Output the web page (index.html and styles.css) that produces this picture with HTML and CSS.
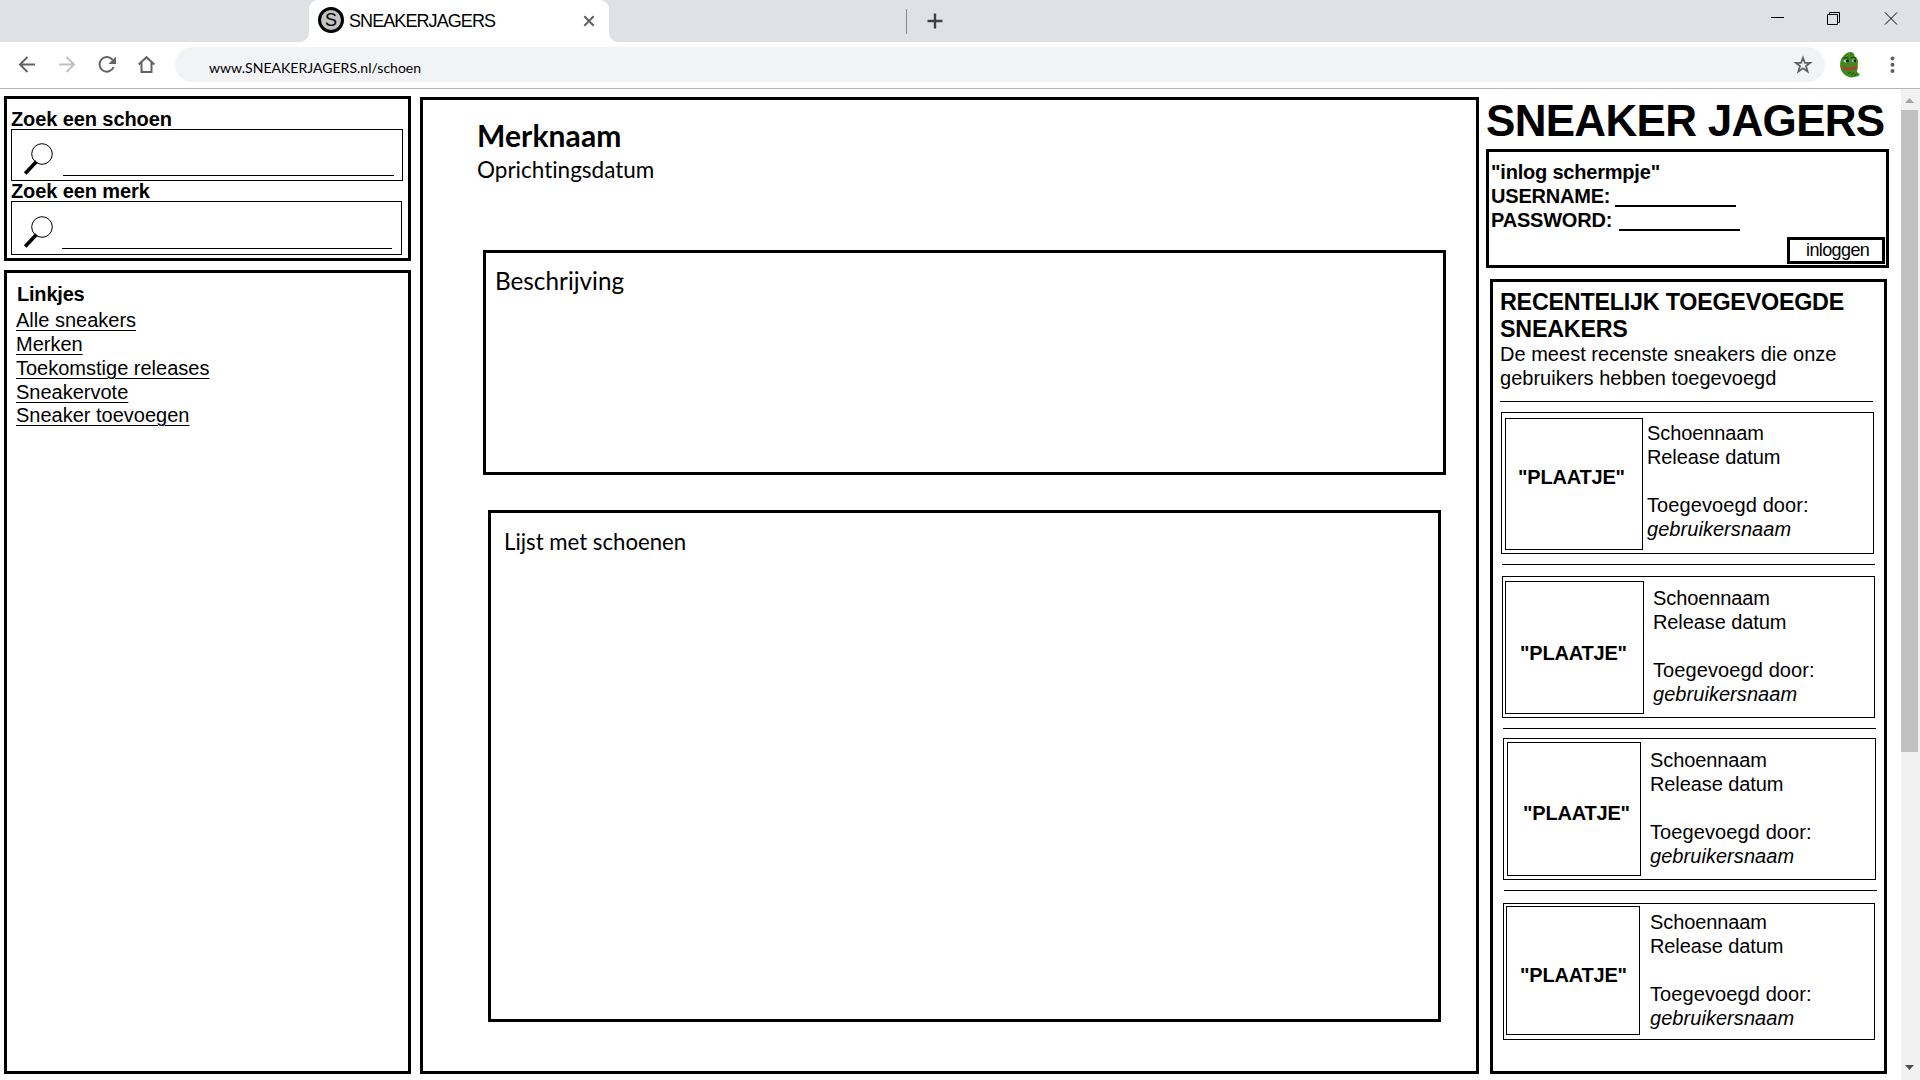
FILE: index.html
```
<!DOCTYPE html>
<html lang="nl">
<head>
<meta charset="utf-8">
<title>SNEAKERJAGERS</title>
<link rel="stylesheet" href="styles.css">
</head>
<body>
<header class="browser">
  <div class="tabstrip">
    <div class="tab">
      <span class="favicon">S</span>
      <span class="tab-title">SNEAKERJAGERS</span>
      <svg class="tab-close" width="12" height="12" viewBox="0 0 12 12"><path d="M1.3 1.3l9.4 9.4M10.7 1.3l-9.4 9.4" stroke="#5f6368" stroke-width="2" fill="none"/></svg>
    </div>
    <span class="tab-separator"></span>
    <svg class="new-tab" width="16" height="16" viewBox="0 0 16 16"><path d="M8 .5v15M.5 8h15" stroke="#3c4043" stroke-width="2.4" fill="none"/></svg>
    <svg class="window-controls" width="129" height="16" viewBox="0 0 129 16" fill="none" stroke="#000">
      <path d="M0 6.5h13"/>
      <path d="M56.500 3.500h10v10h-10zM58.500 3.500v-2h10v10h-2"/>
      <path d="M114 1.500l12 12M126 1.500l-12 12"/>
    </svg>
  </div>
  <div class="toolbar">
    <svg class="nav" width="140" height="20" viewBox="0 0 140 20" fill="none" stroke="#5f6368" stroke-width="2">
      <path d="M17 10.500H2M9.500 3L2 10.500 9.500 18"/>
      <path d="M41 10.500h15M48.500 3l7.500 7.500-7.500 7.500" stroke="#bdc1c6"/>
      <path d="M94.700 6A7.300 7.300 0 1 0 95.600 13"/>
      <path d="M98 2.500v7.500h-7.500z" fill="#5f6368" stroke="none"/>
      <path d="M120.700 10.500L128.500 3.200 136.300 10.500M123.500 8.500V18h10V8.500"/>
    </svg>
    <div class="address">
      <span class="url">www.SNEAKERJAGERS.nl/schoen</span>
      <svg class="star" width="20" height="20" viewBox="0 0 20 20"><path d="M10 2.800l1.900 5h5.300l-4.200 3.300 1.600 5.400L10 13.300l-4.600 3.200L7 11.100 2.800 7.800h5.300z" fill="none" stroke="#5f6368" stroke-width="1.800"/></svg>
    </div>
    <svg class="avatar" width="20" height="26" viewBox="0 0 20 26">
      <path d="M2 6C4 3 7 0 10.500 0c2.500 0 4 2 4.300 4.500 2 1 3.500 3 3.200 5.500l-.5 7-.7 2.500L20 23l-3 1.500-5 1C6 25 1 21 .300 15-.200 11 .500 8 2 6z" fill="#3f8a1c"/>
      <path d="M3 6.500c2-1 4-1 5.500 0M10.500 6c2-1 4-.8 5.500 0" stroke="#1d4f0c" stroke-width="1.300" fill="none"/>
      <ellipse cx="6.500" cy="9" rx="3" ry="1.500" fill="#b9cdb0"/><ellipse cx="14.500" cy="8.800" rx="2.700" ry="1.500" fill="#b9cdb0"/>
      <circle cx="7.500" cy="9" r="1.600" fill="#111"/><circle cx="15" cy="8.800" r="1.500" fill="#111"/>
      <path d="M1.500 14.500c4 2.200 10 2.200 16 .300M2.500 16.500c4 1.600 10 1.300 14.500-.300" stroke="#a8452a" stroke-width="1.600" fill="none"/>
      <path d="M8 21.500l3-1.500M11 23l3-2.500M14.500 24l2-2.500" stroke="#1d4f0c" fill="none"/>
    </svg>
    <svg class="menu" width="5" height="18" viewBox="0 0 5 18" fill="#5f6368"><circle cx="2.500" cy="2.500" r="2"/><circle cx="2.500" cy="8.800" r="2"/><circle cx="2.500" cy="15" r="2"/></svg>
  </div>
</header>

<main class="page">
  <aside class="left">
    <section class="box search">
      <h2 class="label">Zoek een schoen</h2>
      <div class="field field-shoe">
        <svg width="30" height="32" viewBox="0 0 30 32"><ellipse cx="19" cy="11" rx="10.300" ry="10.300" fill="#fff" stroke="#000"/><path d="M13.500 18.500L2.200 30.500" stroke="#000" stroke-width="3.600"/></svg>
        <span class="line"></span>
      </div>
      <h2 class="label">Zoek een merk</h2>
      <div class="field field-brand">
        <svg width="30" height="32" viewBox="0 0 30 32"><ellipse cx="19" cy="11" rx="10.300" ry="10.300" fill="#fff" stroke="#000"/><path d="M13.500 18.500L2.200 30.500" stroke="#000" stroke-width="3.600"/></svg>
        <span class="line"></span>
      </div>
    </section>
    <nav class="box links">
      <h2 class="links-title">Linkjes</h2>
      <a>Alle sneakers</a>
      <a>Merken</a>
      <a>Toekomstige releases</a>
      <a>Sneakervote</a>
      <a>Sneaker toevoegen</a>
    </nav>
  </aside>

  <section class="box center">
    <header class="brand">
      <h1>Merknaam</h1>
      <p>Oprichtingsdatum</p>
    </header>
    <div class="box description">Beschrijving</div>
    <div class="box shoes">Lijst met schoenen</div>
  </section>

  <aside class="right">
    <div class="site-title">SNEAKER JAGERS</div>
    <section class="box login">
      <p>"inlog schermpje"</p>
      <p class="entry">USERNAME: <span class="blank"></span></p>
      <p class="entry entry-password">PASSWORD: <span class="blank"></span></p>
      <div class="login-button">inloggen</div>
    </section>
    <section class="box recent">
      <h2>RECENTELIJK TOEGEVOEGDE SNEAKERS</h2>
      <p class="intro">De meest recenste sneakers die onze gebruikers hebben toegevoegd</p>
      <div class="rule rule-1"></div>
      <article class="card card-1">
        <div class="picture">"PLAATJE"</div>
        <div class="info"><p>Schoennaam</p><p>Release datum</p><p class="by">Toegevoegd door:</p><p><em>gebruikersnaam</em></p></div>
      </article>
      <div class="rule rule-2"></div>
      <article class="card card-2">
        <div class="picture">"PLAATJE"</div>
        <div class="info"><p>Schoennaam</p><p>Release datum</p><p class="by">Toegevoegd door:</p><p><em>gebruikersnaam</em></p></div>
      </article>
      <div class="rule rule-3"></div>
      <article class="card card-3">
        <div class="picture">"PLAATJE"</div>
        <div class="info"><p>Schoennaam</p><p>Release datum</p><p class="by">Toegevoegd door:</p><p><em>gebruikersnaam</em></p></div>
      </article>
      <div class="rule rule-4"></div>
      <article class="card card-4">
        <div class="picture">"PLAATJE"</div>
        <div class="info"><p>Schoennaam</p><p>Release datum</p><p class="by">Toegevoegd door:</p><p><em>gebruikersnaam</em></p></div>
      </article>
    </section>
  </aside>

  <div class="scrollbar">
    <svg width="9" height="5" viewBox="0 0 9 5"><path d="M0 5L4.500 0 9 5z" fill="#a3a3a3"/></svg>
    <div class="thumb"></div>
    <svg class="down" width="9" height="5" viewBox="0 0 9 5"><path d="M0 0L4.500 5 9 0z" fill="#505050"/></svg>
  </div>
</main>
</body>
</html>
```
FILE: styles.css
```
* { box-sizing: border-box; }
body {
  margin: 0;
  width: 1920px;
  height: 1080px;
  overflow: hidden;
  background: #fff;
  color: #000;
  font: 20px/24px "Liberation Sans", Arial, sans-serif;
}
h1, h2, p { margin: 0; font-size: inherit; }
svg { display: block; flex: none; }

/* Browser chrome */
.browser { height: 89px; border-bottom: 1px solid #b5b5b5; }
.tabstrip {
  display: flex;
  height: 42px;
  padding-left: 309px;
  background: #dee1e6;
}
.tab {
  position: relative;
  display: flex;
  width: 300px;
  padding-left: 9px;
  border-radius: 9px 9px 0 0;
  background: #fff;
}
.tab::before, .tab::after {
  content: "";
  position: absolute;
  bottom: 0;
  width: 9px;
  height: 9px;
}
.tab::before { left: -9px; background: radial-gradient(circle at 0 0, transparent 8.5px, #fff 9px); }
.tab::after { right: -9px; background: radial-gradient(circle at 100% 0, transparent 8.5px, #fff 9px); }
.favicon {
  width: 26px;
  height: 26px;
  margin-top: 7px;
  border: 3px solid #000;
  border-radius: 50%;
  background: #c3c3c3;
  font-size: 18px;
  line-height: 20px;
  text-align: center;
}
.tab-title { margin: 9px 0 0 5px; font-size: 18px; letter-spacing: -0.92px; }
.tab-close { margin: 15px 14px 0 auto; }
.tab-separator { width: 1px; height: 25px; margin: 9px 0 0 297px; background: #85898e; }
.new-tab { margin: 13px 0 0 20px; }
.window-controls { margin: 11px 20px 0 auto; }

.toolbar { display: flex; height: 46px; }
.nav { margin: 12px 0 0 18px; }
.address {
  display: flex;
  justify-content: space-between;
  width: 1650px;
  height: 35px;
  margin: 5px 0 0 17px;
  padding: 0 12px 0 34px;
  border-radius: 18px;
  background: #f1f3f4;
}
.url { margin-top: 9px; font: 14px/24px Lato, Carlito, sans-serif; letter-spacing: 0.02px; }
.star { margin-top: 8px; }
.avatar { margin: 10px 0 0 15px; }
.menu { margin: 14px 0 0 30px; }

/* Page */
.page { display: flex; height: 991px; padding-left: 4px; }
.box { border: 3px solid #000; }
.left { width: 407px; padding-top: 7px; }

.search { height: 165px; padding: 10px 0 0 4px; }
.label { line-height: 20px; letter-spacing: -0.1px; }
.field { display: flex; border: 1px solid #000; }
.field svg { margin: 13px 0 0 11px; }
.field .line { height: 1px; background: #000; }
.field-shoe { width: 392px; height: 52px; }
.field-shoe .line { width: 331px; margin: 45px 0 0 10px; }
.field-brand { width: 391px; height: 54px; }
.field-brand svg { margin-top: 14px; }
.field-brand .line { width: 330px; margin: 46px 0 0 9px; }

.links { display: flex; flex-direction: column; align-items: flex-start; height: 804px; margin-top: 9px; padding: 7px 0 0 9px; }
.links-title { padding-left: 1px; line-height: 28px; letter-spacing: -0.2px; }
.links a { text-decoration: underline; text-decoration-thickness: 1px; text-underline-offset: 3px; }
.links a:last-child { margin-top: -1px; }

.center {
  width: 1059px;
  height: 977px;
  margin: 8px 0 0 9px;
  font: 22.2px/30px Lato, Carlito, sans-serif;
  font-variant-ligatures: none;
}
.brand { height: 150px; padding: 17px 0 0 54px; }
.brand h1 { margin-bottom: 2px; font-size: 30px; line-height: 36px; letter-spacing: 0.1px; }
.brand p { font-size: 22.5px; }
.description { width: 963px; height: 225px; margin-left: 60px; padding: 13px 9px; font-size: 24.3px; }
.shoes { width: 953px; height: 512px; margin: 35px 0 0 65px; padding: 14px 13px; }

.right { width: 403px; margin-left: 7px; padding-top: 7px; }
.site-title { height: 53px; font-size: 44px; font-weight: bold; line-height: 49px; letter-spacing: -0.7px; white-space: nowrap; }
.login { height: 119px; padding: 8px 0 0 2px; font-weight: bold; letter-spacing: -0.2px; }
.entry { display: flex; }
.blank { width: 121px; height: 2px; margin: 21px 0 0 5px; background: #000; }
.entry-password .blank { margin-left: 7px; }
.login-button {
  width: 98px;
  height: 27px;
  margin: 5px 1px 0 auto;
  padding-left: 16px;
  border: 3px solid #000;
  font-size: 18px;
  font-weight: normal;
  line-height: 20px;
  letter-spacing: -0.6px;
}
.recent { width: 397px; height: 795px; margin: 11px 0 0 4px; padding: 7px 0 0 6px; }
.recent h2 { padding-left: 1px; font-size: 23.3px; line-height: 27px; letter-spacing: -0.22px; }
.intro { width: 350px; margin-top: -1px; padding-left: 1px; letter-spacing: 0.02px; }
.rule { width: 373px; height: 1px; background: #000; }
.rule-1 { margin: 11px 0 10px 1px; }
.rule-2 { margin: 10px 0 11px 3px; }
.rule-3 { margin: 10px 0 9px 4px; }
.rule-4 { margin: 10px 0 12px 5px; }

.card { display: flex; width: 373px; height: 142px; border: 1px solid #000; }
.picture { border: 1px solid #000; font-weight: bold; letter-spacing: -0.2px; }
.info { letter-spacing: -0.1px; }
.by { margin-top: 24px; letter-spacing: 0.1px; }
.info em { letter-spacing: 0.05px; }
.card-1 { margin-left: 2px; }
.card-1 .picture { width: 138px; height: 132px; margin: 5px 0 0 3px; padding: 46px 0 0 12px; }
.card-1 .info { margin: 8px 0 0 4px; }
.card-2 { margin-left: 3px; }
.card-2 .picture { width: 139px; height: 133px; margin: 4px 0 0 2px; padding: 59px 0 0 14px; }
.card-2 .info { margin: 9px 0 0 9px; }
.card-3 { margin-left: 4px; }
.card-3 .picture { width: 134px; height: 134px; margin: 3px 0 0 3px; padding: 58px 0 0 15px; }
.card-3 .info { margin: 9px 0 0 9px; }
.card-4 { width: 372px; height: 137px; margin-left: 4px; }
.card-4 .picture { width: 134px; height: 129px; margin: 2px 0 0 2px; padding: 56px 0 0 13px; }
.card-4 .info { margin: 6px 0 0 10px; }

.scrollbar { display: flex; flex-direction: column; width: 19px; margin-left: auto; padding-top: 9px; background: #f1f1f1; }
.scrollbar svg { margin-left: 4px; }
.thumb { width: 17px; height: 642px; margin-top: 7px; background: #c1c1c1; }
.scrollbar .down { margin-top: 313px; }
```
